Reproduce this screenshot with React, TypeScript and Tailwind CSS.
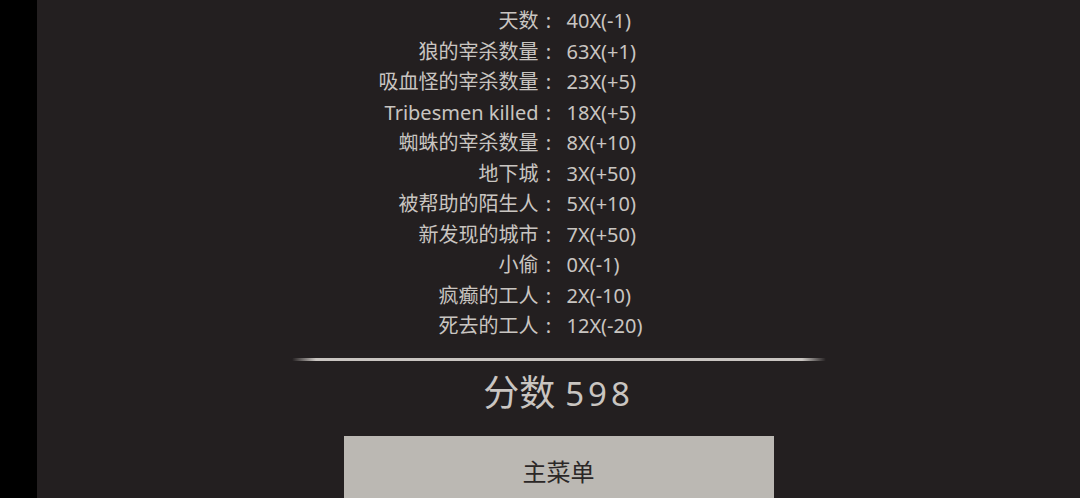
import React from "react";

interface StatRow {
  label: string;
  value: string;
}

const stats: StatRow[] = [
  { label: "天数", value: "40X(-1)" },
  { label: "狼的宰杀数量", value: "63X(+1)" },
  { label: "吸血怪的宰杀数量", value: "23X(+5)" },
  { label: "Tribesmen killed", value: "18X(+5)" },
  { label: "蜘蛛的宰杀数量", value: "8X(+10)" },
  { label: "地下城", value: "3X(+50)" },
  { label: "被帮助的陌生人", value: "5X(+10)" },
  { label: "新发现的城市", value: "7X(+50)" },
  { label: "小偷", value: "0X(-1)" },
  { label: "疯癫的工人", value: "2X(-10)" },
  { label: "死去的工人", value: "12X(-20)" },
];

const font = {
  fontFamily: '"Noto Sans", "Noto Sans CJK SC", sans-serif',
};

export default function App() {
  return (
    <div
      className="flex h-[498px] w-[1080px] overflow-hidden bg-black"
      style={font}
    >
      {/* system inset strip */}
      <div className="w-[37px] shrink-0 bg-black" />

      <main className="flex flex-1 flex-col items-center bg-[#231f20] pt-[6px]">
        <div className="w-full shrink-0">
          {stats.map((row) => (
            <div
              key={row.label}
              className="grid grid-cols-2 text-[20px] leading-[30.5px] text-[#c9c5c1]"
            >
              <div className="flex justify-end">
                <span className="whitespace-nowrap">{row.label}</span>
                <span className="inline-block w-[20px] text-center">:</span>
              </div>
              <div className="pl-[8px] whitespace-nowrap">{row.value}</div>
            </div>
          ))}
        </div>

        {/* tapered divider */}
        <div className="mt-[16px] flex h-[3px] w-[534px] shrink-0">
          <div className="w-[24px] rounded-l-full bg-linear-to-r from-transparent to-[#c9c5c1]" />
          <div className="flex-1 bg-[#c9c5c1]" />
          <div className="w-[24px] rounded-r-full bg-linear-to-l from-transparent to-[#c9c5c1]" />
        </div>

        <div className="mt-[10px] flex shrink-0 items-baseline gap-[10px] text-[#c9c5c1] leading-[44px]">
          <span className="text-[36px]">分数</span>
          <span className="text-[33px] tracking-[4px]">598</span>
        </div>

        <button className="mt-[20px] flex h-[72px] w-[430px] shrink-0 items-center justify-center bg-[#bbb8b3] text-[24px] text-[#2b2727]">
          主菜单
        </button>
      </main>
    </div>
  );
}
